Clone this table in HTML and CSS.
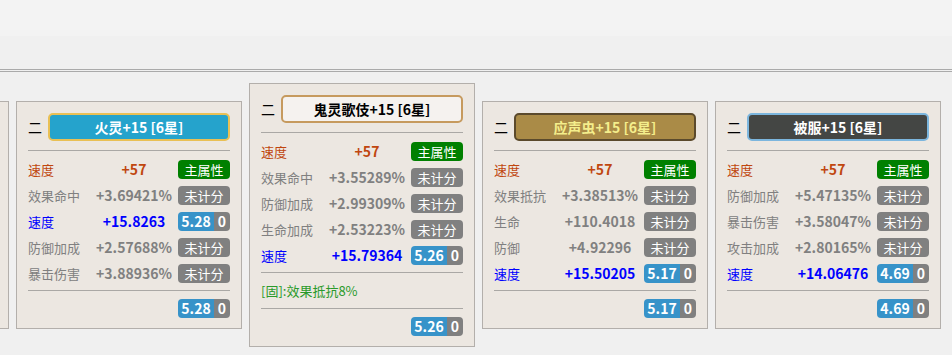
FILE: index.html
```html
<!DOCTYPE html>
<html lang="zh-CN">
<head>
<meta charset="utf-8">
<title>御魂</title>
<link rel="stylesheet" href="styles.css">
</head>
<body>
<div class="topbar"></div>
<div class="toolbar"></div>
<div class="viewport">
  <div class="track">
    <div class="card card-peek"></div>

    <div class="card">
      <div class="head"><span class="pos">二</span><div class="name n-blue">火灵+15 [6星]</div></div>
      <div class="sep"></div>
      <div class="rows">
        <div class="row"><span class="lab main">速度</span><span class="val main">+57</span><span class="badge green">主属性</span></div>
        <div class="row"><span class="lab">效果命中</span><span class="val">+3.69421%</span><span class="badge gray">未计分</span></div>
        <div class="row"><span class="lab spd">速度</span><span class="val spd">+15.8263</span><span class="score"><span class="s-val">5.28</span><span class="s-zero">0</span></span></div>
        <div class="row"><span class="lab">防御加成</span><span class="val">+2.57688%</span><span class="badge gray">未计分</span></div>
        <div class="row"><span class="lab">暴击伤害</span><span class="val">+3.88936%</span><span class="badge gray">未计分</span></div>
      </div>
      <div class="sep sep-b"></div>
      <div class="total"><span class="score"><span class="s-val">5.28</span><span class="s-zero">0</span></span></div>
    </div>

    <div class="card">
      <div class="head"><span class="pos">二</span><div class="name n-light">鬼灵歌伎+15 [6星]</div></div>
      <div class="sep"></div>
      <div class="rows">
        <div class="row"><span class="lab main">速度</span><span class="val main">+57</span><span class="badge green">主属性</span></div>
        <div class="row"><span class="lab">效果命中</span><span class="val">+3.55289%</span><span class="badge gray">未计分</span></div>
        <div class="row"><span class="lab">防御加成</span><span class="val">+2.99309%</span><span class="badge gray">未计分</span></div>
        <div class="row"><span class="lab">生命加成</span><span class="val">+2.53223%</span><span class="badge gray">未计分</span></div>
        <div class="row"><span class="lab spd">速度</span><span class="val spd">+15.79364</span><span class="score"><span class="s-val">5.26</span><span class="s-zero">0</span></span></div>
      </div>
      <div class="sep sep-b"></div>
      <div class="fixed">[固]:效果抵抗8%</div>
      <div class="sep"></div>
      <div class="total"><span class="score"><span class="s-val">5.26</span><span class="s-zero">0</span></span></div>
    </div>

    <div class="card">
      <div class="head"><span class="pos">二</span><div class="name n-gold">应声虫+15 [6星]</div></div>
      <div class="sep"></div>
      <div class="rows">
        <div class="row"><span class="lab main">速度</span><span class="val main">+57</span><span class="badge green">主属性</span></div>
        <div class="row"><span class="lab">效果抵抗</span><span class="val">+3.38513%</span><span class="badge gray">未计分</span></div>
        <div class="row"><span class="lab">生命</span><span class="val">+110.4018</span><span class="badge gray">未计分</span></div>
        <div class="row"><span class="lab">防御</span><span class="val">+4.92296</span><span class="badge gray">未计分</span></div>
        <div class="row"><span class="lab spd">速度</span><span class="val spd">+15.50205</span><span class="score"><span class="s-val">5.17</span><span class="s-zero">0</span></span></div>
      </div>
      <div class="sep sep-b"></div>
      <div class="total"><span class="score"><span class="s-val">5.17</span><span class="s-zero">0</span></span></div>
    </div>

    <div class="card">
      <div class="head"><span class="pos">二</span><div class="name n-dark">被服+15 [6星]</div></div>
      <div class="sep"></div>
      <div class="rows">
        <div class="row"><span class="lab main">速度</span><span class="val main">+57</span><span class="badge green">主属性</span></div>
        <div class="row"><span class="lab">防御加成</span><span class="val">+5.47135%</span><span class="badge gray">未计分</span></div>
        <div class="row"><span class="lab">暴击伤害</span><span class="val">+3.58047%</span><span class="badge gray">未计分</span></div>
        <div class="row"><span class="lab">攻击加成</span><span class="val">+2.80165%</span><span class="badge gray">未计分</span></div>
        <div class="row"><span class="lab spd">速度</span><span class="val spd">+14.06476</span><span class="score"><span class="s-val">4.69</span><span class="s-zero">0</span></span></div>
      </div>
      <div class="sep sep-b"></div>
      <div class="total"><span class="score"><span class="s-val">4.69</span><span class="s-zero">0</span></span></div>
    </div>
  </div>
</div>
</body>
</html>
```

FILE: styles.css
```css
* { box-sizing: border-box; }

html, body {
  margin: 0;
  padding: 0;
  background: #f0f0f0;
  font-family: "Noto Sans CJK SC", "Noto Sans", sans-serif;
  font-size: 13px;
  color: #000;
}

.topbar {
  height: 36px;
  background: #f3f3f3;
}

.toolbar {
  height: 36px;
  background: #f0f0f0;
  border-bottom: 3px double #aaaaaa;
}

.viewport {
  overflow: hidden;
  height: 283px;
  padding-top: 11px;
}

.track {
  display: flex;
  align-items: center;
  gap: 7px;
  margin-left: -217px;
}

.card {
  flex: 0 0 226px;
  width: 226px;
  background: #ece7e1;
  border: 1px solid #b3afab;
  padding: 11px 11px 10px 11px;
}

.card-peek {
  height: 228px;
}

.head {
  display: flex;
  align-items: center;
  gap: 6px;
  height: 28px;
}

.pos {
  width: 14px;
  font-size: 14px;
  line-height: 14px;
  color: #000;
}

.name {
  flex: 1;
  height: 28px;
  border: 2px solid;
  border-radius: 5px;
  font-size: 14px;
  font-weight: bold;
  line-height: 24px;
  text-align: center;
  white-space: nowrap;
}

.n-blue { background: #25a3cc; border-color: #e9c055; color: #fff; }
.n-light { background: #f5f2ef; border-color: #c69a5e; color: #000; }
.n-gold { background: #aa8b47; border-color: #5b4a2c; color: #f4ee8c; }
.n-dark { background: #444644; border-color: #7cb6de; color: #fff; }

.sep {
  height: 1px;
  background: #aaa8a5;
  margin-top: 9px;
}

.sep-b { margin-top: 4px; }

.rows {
  margin-top: 5px;
}

.row {
  display: grid;
  grid-template-columns: 62px 88px 52px;
  align-items: center;
  height: 26px;
}

.lab {
  color: #808080;
  white-space: nowrap;
}

.val {
  color: #808080;
  font-weight: bold;
  font-size: 14px;
  text-align: center;
  white-space: nowrap;
}

.main { color: #c0460f; }
.val.main { color: #c0460f; }
.spd { color: #0000ff; }
.val.spd { color: #0000ff; }

.badge {
  display: block;
  height: 19px;
  line-height: 19px;
  border-radius: 4px;
  color: #fff;
  text-align: center;
  font-size: 13px;
}

.green { background: #008000; }
.gray { background: #808080; }

.score {
  display: flex;
  width: 52px;
  height: 19px;
  line-height: 19px;
  border-radius: 4px;
  overflow: hidden;
  color: #fff;
  font-weight: bold;
  font-size: 14px;
}

.s-val {
  width: 36px;
  background: #3793c9;
  text-align: center;
}

.s-zero {
  flex: 1;
  background: #808080;
  text-align: center;
}

.fixed {
  height: 35px;
  line-height: 35px;
  color: #2a9a2a;
  font-size: 13px;
}

.fixed + .sep { margin-top: 0; }

.total {
  display: flex;
  justify-content: flex-end;
  margin-top: 8px;
}
```
